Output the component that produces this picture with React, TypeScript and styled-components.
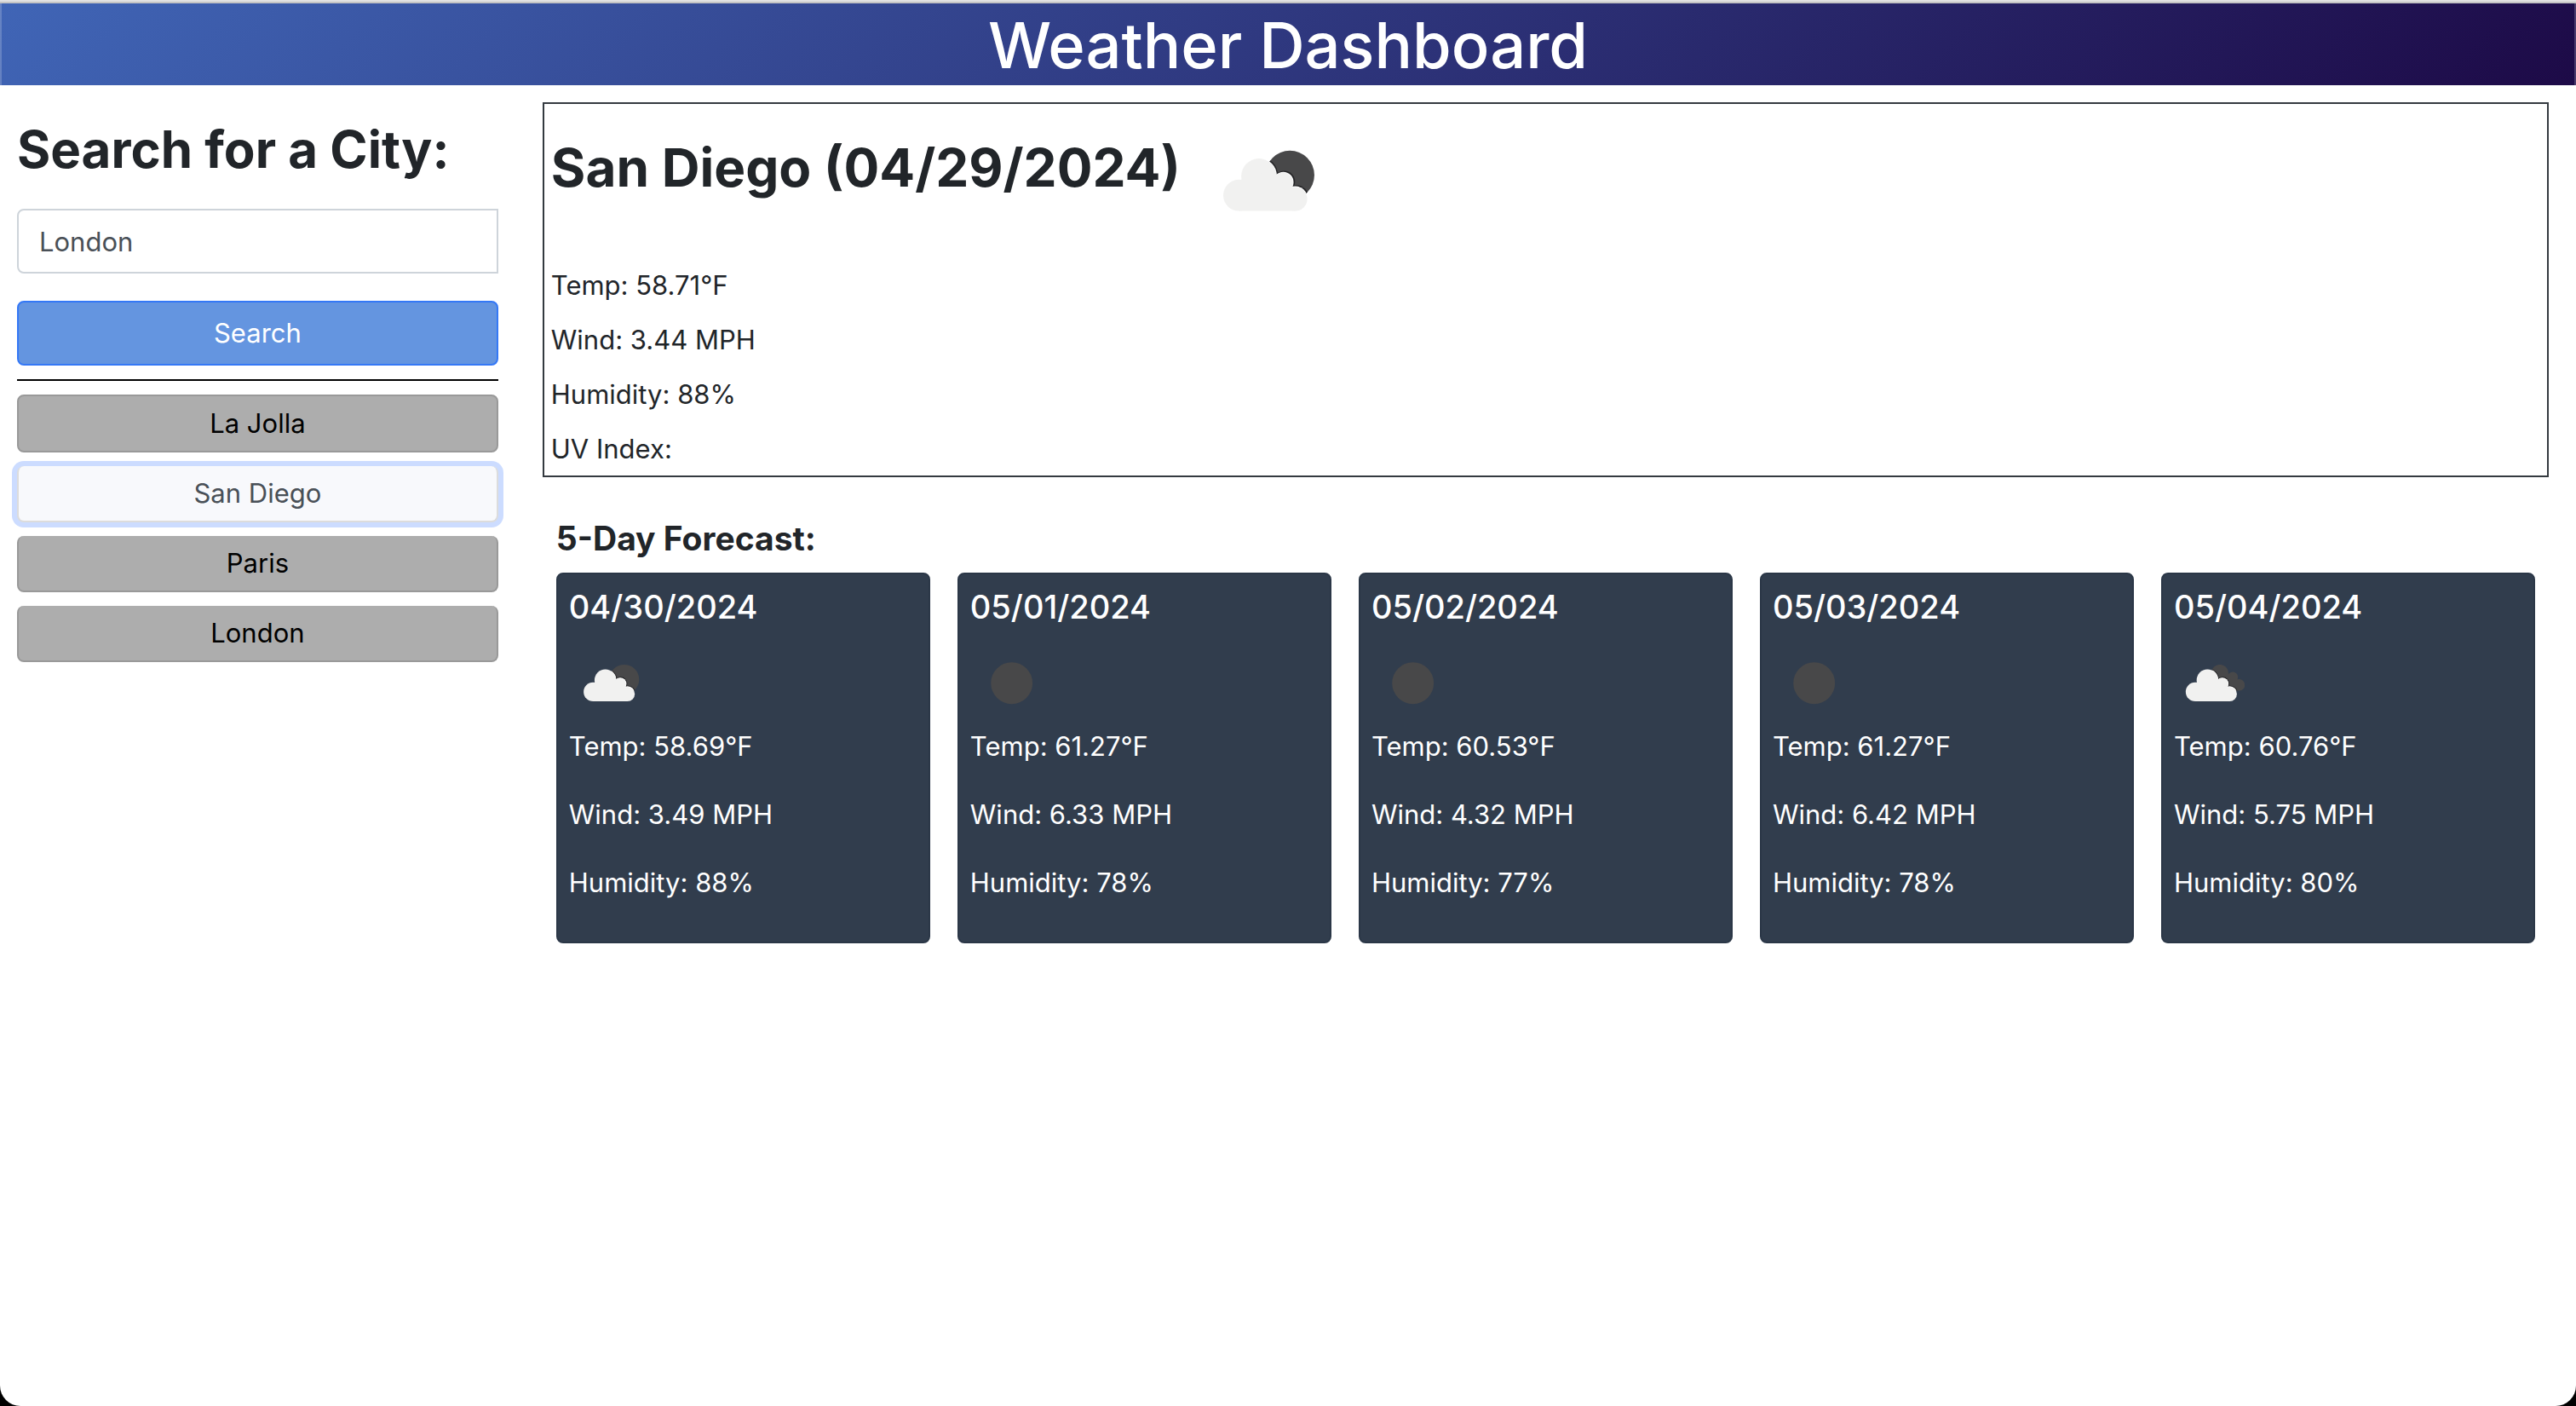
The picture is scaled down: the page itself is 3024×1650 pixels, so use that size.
import React, { useState } from "react";
import styled, { createGlobalStyle } from "styled-components";

const GlobalStyle = createGlobalStyle`
  *, *::before, *::after { box-sizing: border-box; }
  body {
    margin: 0;
    background: #000;
    color: #212529;
    font-family: Inter, "Liberation Sans", sans-serif;
    font-size: 31px;
    line-height: 48px;
  }
  h1, h2, h3, p, ul { margin: 0; padding: 0; }
`;

const Page = styled.div`
  min-height: 100vh;
  background: #fff;
  border-radius: 0 0 24px 24px;
`;

const TopEdge = styled.div`
  height: 4px;
  background: linear-gradient(#e2e2e2 50%, #c4c4c4 50%);
`;

const Header = styled.header`
  padding-top: 2px;
  background: linear-gradient(135deg, #4065b6, #1d0a47);
  box-shadow: inset 2px 0 rgba(255, 255, 255, 0.2), inset -2px 0 rgba(255, 255, 255, 0.2);
  color: #fff;
  text-align: center;
`;

const Title = styled.h1`
  font-size: 74px;
  font-weight: 500;
  line-height: 94px;
`;

const Columns = styled.div`
  display: grid;
  grid-template-columns: 20% 1fr;
`;

const Sidebar = styled.aside`
  padding: 37px 20px;
`;

const Main = styled.main`
  padding: 20px 32px;
`;

const SearchForm = styled.form`
  display: flex;
  flex-direction: column;
  gap: 32px;
  padding-bottom: 16px;
  border-bottom: 2px solid #000;
`;

const SearchLabel = styled.label`
  font-size: 60px;
  font-weight: 700;
  line-height: 76px;
  white-space: nowrap;
`;

const CityInput = styled.input`
  width: 100%;
  height: 76px;
  padding: 12px 24px;
  border: 2px solid #ced4da;
  border-radius: 8px 0 0 8px;
  background: #fff;
  color: #495057;
  font: inherit;
`;

const SearchButton = styled.button`
  height: 76px;
  border: 2px solid #3478f6;
  border-radius: 8px;
  background: #6495e0;
  color: #fff;
  font: inherit;
  cursor: pointer;
`;

const HistoryButton = styled.button<{ $active: boolean }>`
  display: block;
  width: 100%;
  padding: 8px 24px;
  border: 2px solid ${(p) => (p.$active ? "#dcdcdc" : "#999")};
  border-radius: 8px;
  background: ${(p) => (p.$active ? "#f8f9fc" : "#adadad")};
  box-shadow: ${(p) => (p.$active ? "0 0 0 6px #ccdcff" : "none")};
  color: ${(p) => (p.$active ? "#495057" : "#000")};
  font: inherit;
  cursor: pointer;
`;

const History = styled.ul`
  display: flex;
  flex-direction: column;
  gap: 16px;
  padding-top: 16px;
  list-style: none;

  li + li ${HistoryButton} {
    border-top: 0;
  }
`;

const Current = styled.section`
  padding: 9px 8px 7px;
  border: 2px solid #343a40;
`;

const CurrentTop = styled.div`
  display: flex;
  align-items: flex-start;
  gap: 22px;
  margin-bottom: 16px;
`;

const CurrentTitle = styled.h2`
  padding-top: 28px;
  font-size: 62px;
  font-weight: 700;
  line-height: 76px;
`;

const CurrentStats = styled.div`
  display: flex;
  flex-direction: column;
  gap: 16px;
`;

const Forecast = styled.section`
  padding: 48px 16px 0;
`;

const ForecastTitle = styled.h2`
  margin-bottom: 16px;
  font-size: 39px;
  font-weight: 700;
  line-height: 48px;
`;

const Days = styled.div`
  display: grid;
  grid-template-columns: repeat(5, 1fr);
  gap: 32px;
`;

const DayCard = styled.article`
  padding: 14px 13px 45px;
  border: 2px solid #2b3747;
  border-radius: 8px;
  background: #313d4d;
  color: #fff;
`;

const DayTitle = styled.h3`
  margin-bottom: 16px;
  font-size: 38px;
  font-weight: 500;
  line-height: 48px;
`;

const DayStats = styled.div`
  display: flex;
  flex-direction: column;
  gap: 32px;
`;

const IconSvg = styled.svg<{ $size: number }>`
  display: block;
  flex: none;
  width: ${(p) => p.$size}px;
  height: ${(p) => p.$size}px;
`;

type Sky = "few" | "clear" | "broken";

const CloudShape = () => (
  <g fill="#f1f1f0">
    <circle cx="165" cy="239" r="55" />
    <circle cx="235" cy="172" r="62" />
    <circle cx="320" cy="195" r="35" />
    <circle cx="363" cy="252" r="42" />
    <path d="M165 294H363V252L320 195L235 160L173 184Z" />
  </g>
);

/* Dark shadow and light rim along the upper right edge of the cloud. */
const CloudEdge = () => (
  <>
    <g fill="#232325">
      <circle cx="240" cy="168" r="62" />
      <circle cx="324" cy="191" r="38" />
      <circle cx="366" cy="247" r="44" />
    </g>
    <g fill="#ffffff">
      <circle cx="237" cy="170" r="61" />
      <circle cx="321" cy="193" r="36" />
      <circle cx="363" cy="249" r="42" />
    </g>
  </>
);

const WeatherIcon = ({ sky, size }: { sky: Sky; size: number }) => (
  <IconSvg $size={size} viewBox="26 -55 491 491" role="img" aria-label={`${sky} sky`}>
    {sky === "clear" && <circle cx="265" cy="189" r="120" fill="#484849" />}
    {sky === "few" && (
      <>
        <clipPath id={`disc-${size}`}>
          <circle cx="344" cy="168" r="86" />
        </clipPath>
        <circle cx="344" cy="168" r="86" fill="#484849" />
        <g clipPath={`url(#disc-${size})`}>
          <CloudEdge />
        </g>
        <CloudShape />
      </>
    )}
    {sky === "broken" && (
      <>
        <clipPath id="rear-cloud">
          <circle cx="291" cy="131" r="49" />
          <circle cx="365" cy="154" r="30" />
          <circle cx="401" cy="200" r="34" />
          <path d="M291 131L365 140L401 180V234H300Z" />
        </clipPath>
        <g clipPath="url(#rear-cloud)">
          <path d="M230 70H450V250H230Z" fill="#484849" />
          <g transform="translate(-16 0)">
            <CloudEdge />
          </g>
        </g>
        <g transform="translate(-16 0)">
          <CloudShape />
        </g>
      </>
    )}
  </IconSvg>
);

const cities = ["La Jolla", "San Diego", "Paris", "London"];

const forecast: { date: string; sky: Sky; temp: string; wind: string; humidity: number }[] = [
  { date: "04/30/2024", sky: "few", temp: "58.69", wind: "3.49", humidity: 88 },
  { date: "05/01/2024", sky: "clear", temp: "61.27", wind: "6.33", humidity: 78 },
  { date: "05/02/2024", sky: "clear", temp: "60.53", wind: "4.32", humidity: 77 },
  { date: "05/03/2024", sky: "clear", temp: "61.27", wind: "6.42", humidity: 78 },
  { date: "05/04/2024", sky: "broken", temp: "60.76", wind: "5.75", humidity: 80 },
];

export default function App() {
  const [query, setQuery] = useState("London");
  const [active, setActive] = useState("San Diego");

  return (
    <>
      <GlobalStyle />
      <Page>
        <TopEdge />
        <Header>
          <Title>Weather Dashboard</Title>
        </Header>
        <Columns>
          <Sidebar>
            <SearchForm onSubmit={(e) => e.preventDefault()}>
              <SearchLabel htmlFor="city">Search for a City:</SearchLabel>
              <CityInput id="city" value={query} onChange={(e) => setQuery(e.target.value)} />
              <SearchButton type="submit">Search</SearchButton>
            </SearchForm>
            <History>
              {cities.map((city) => (
                <li key={city}>
                  <HistoryButton type="button" $active={city === active} onClick={() => setActive(city)}>
                    {city}
                  </HistoryButton>
                </li>
              ))}
            </History>
          </Sidebar>
          <Main>
            <Current>
              <CurrentTop>
                <CurrentTitle>San Diego (04/29/2024)</CurrentTitle>
                <WeatherIcon sky="few" size={164} />
              </CurrentTop>
              <CurrentStats>
                <p>Temp: 58.71°F</p>
                <p>Wind: 3.44 MPH</p>
                <p>Humidity: 88%</p>
                <p>UV Index:</p>
              </CurrentStats>
            </Current>
            <Forecast>
              <ForecastTitle>5-Day Forecast:</ForecastTitle>
              <Days>
                {forecast.map((day) => (
                  <DayCard key={day.date}>
                    <DayTitle>{day.date}</DayTitle>
                    <WeatherIcon sky={day.sky} size={100} />
                    <DayStats>
                      <p>Temp: {day.temp}°F</p>
                      <p>Wind: {day.wind} MPH</p>
                      <p>Humidity: {day.humidity}%</p>
                    </DayStats>
                  </DayCard>
                ))}
              </Days>
            </Forecast>
          </Main>
        </Columns>
      </Page>
    </>
  );
}
